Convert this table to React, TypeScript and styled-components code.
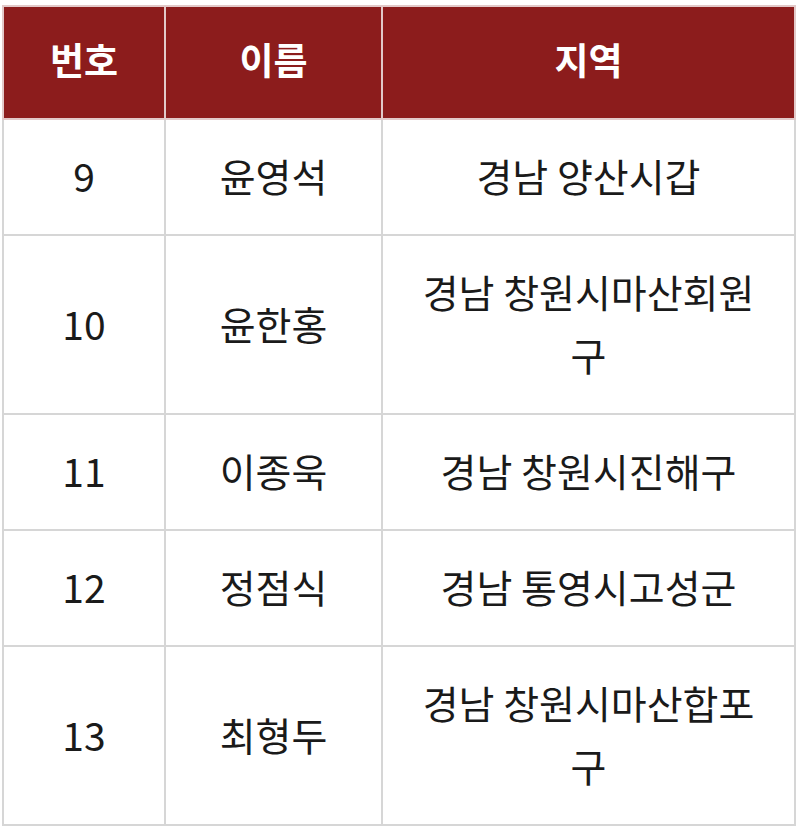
import styled, { createGlobalStyle } from 'styled-components';

const GlobalStyle = createGlobalStyle`
  html, body {
    margin: 0;
    padding: 0;
    background: #ffffff;
  }
  body {
    font-family: "Noto Sans CJK KR", "Noto Sans", sans-serif;
  }
`;

const Page = styled.div`
  padding: 5px 0 0 2px;
`;

const Table = styled.table`
  width: 794px;
  border-collapse: collapse;
  table-layout: fixed;
  font-size: 39px;
  color: #1a1a1a;
`;

const HeadCell = styled.th<{ $width: number }>`
  width: ${(p) => p.$width}px;
  height: 103px;
  background: #8c1c1c;
  color: #ffffff;
  font-weight: 700;
  font-size: 37px;
  text-align: center;
  vertical-align: middle;
  border: 2px solid #e2c9c9;
  padding: 0 0 8px;
`;

const Cell = styled.td`
  text-align: center;
  vertical-align: middle;
  border: 2px solid #d6d6d6;
  padding: 24px 34px 27px;
  line-height: 63px;
  font-weight: 400;
`;

const rows = [
  { no: '9', name: '윤영석', area: '경남 양산시갑' },
  { no: '10', name: '윤한홍', area: '경남 창원시마산회원구' },
  { no: '11', name: '이종욱', area: '경남 창원시진해구' },
  { no: '12', name: '정점식', area: '경남 통영시고성군' },
  { no: '13', name: '최형두', area: '경남 창원시마산합포구' },
];

export default function App() {
  return (
    <Page>
      <GlobalStyle />
      <Table>
        <thead>
          <tr>
            <HeadCell $width={160}>번호</HeadCell>
            <HeadCell $width={215}>이름</HeadCell>
            <HeadCell $width={411}>지역</HeadCell>
          </tr>
        </thead>
        <tbody>
          {rows.map((r) => (
            <tr key={r.no}>
              <Cell>{r.no}</Cell>
              <Cell>{r.name}</Cell>
              <Cell>{r.area}</Cell>
            </tr>
          ))}
        </tbody>
      </Table>
    </Page>
  );
}
